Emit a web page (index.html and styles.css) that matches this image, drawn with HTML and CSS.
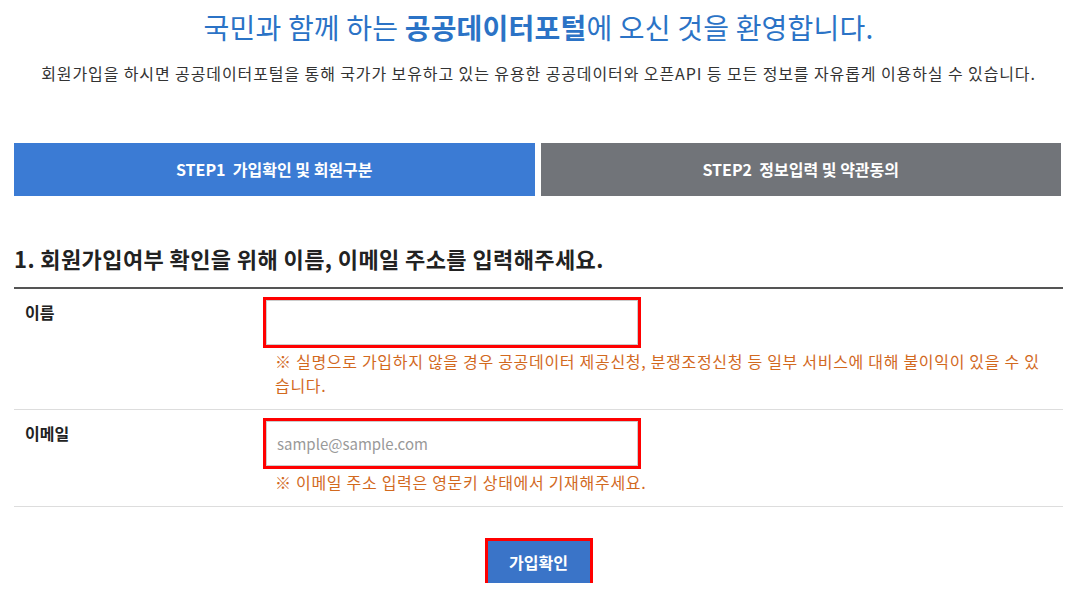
FILE: index.html
```html
<!DOCTYPE html>
<html>
    <head>
        <title>회원가입 - 공공데이터포털</title>
        <link rel="stylesheet" href="styles.css">
    </head>
    <body>
        <div class="wrap">
            <div class="intro">
                <h1>국민과 함께 하는 <b>공공데이터포털</b>에 오신 것을 환영합니다.</h1>
                <p>회원가입을 하시면 공공데이터포털을 통해 국가가 보유하고 있는 유용한 공공데이터와 오픈API 등 모든 정보를 자유롭게 이용하실 수 있습니다.</p>
            </div>

            <div class="steps">
                <div class="step on">STEP1&nbsp; 가입확인 및 회원구분</div>
                <div class="step">STEP2&nbsp; 정보입력 및 약관동의</div>
            </div>

            <h2 class="title">1. 회원가입여부 확인을 위해 이름, 이메일 주소를 입력해주세요.</h2>

            <form name="joinform" class="form">
                <div class="row">
                    <label class="label" for="name">이름</label>
                    <div class="value">
                        <input id="name" name="name" type="text" class="field">
                        <p class="note">※ 실명으로 가입하지 않을 경우 공공데이터 제공신청, 분쟁조정신청 등 일부 서비스에 대해 불이익이 있을 수 있습니다.</p>
                    </div>
                </div>
                <div class="row">
                    <label class="label" for="email">이메일</label>
                    <div class="value">
                        <input id="email" name="email" type="text" class="field" placeholder="sample@sample.com">
                        <p class="note">※ 이메일 주소 입력은 영문키 상태에서 기재해주세요.</p>
                    </div>
                </div>
                <div class="buttons">
                    <button type="button" class="button">가입확인</button>
                </div>
            </form>
        </div>
    </body>
</html>
```

FILE: styles.css
```css
body {
    margin: 0;
    font-family: "Noto Sans CJK KR", "Noto Sans", sans-serif;
    color: #333;
    background: #fff;
}
.wrap {
    padding: 0 4px 0 14px;
}
.intro {
    text-align: center;
    padding-top: 8px;
}
.intro h1 {
    margin: 0;
    font-size: 28px;
    line-height: 38px;
    letter-spacing: 0.2px;
    font-weight: normal;
    color: #2b73c6;
}
.intro p {
    margin: 15px 0 0;
    font-size: 16px;
    line-height: 24px;
    letter-spacing: 0.9px;
    color: #333;
}
.steps {
    display: flex;
    gap: 6px;
    margin-top: 58px;
    padding-right: 2px;
}
.step {
    flex: 1;
    height: 53px;
    line-height: 53px;
    text-align: center;
    font-size: 16px;
    font-weight: bold;
    color: #fff;
    background: #717479;
}
.step.on {
    background: #3b7bd4;
}
.title {
    margin: 47px 0 0;
    padding-bottom: 14px;
    font-size: 22px;
    line-height: 30px;
    letter-spacing: 0.4px;
    color: #222;
    border-bottom: 2px solid #555;
}
.row {
    display: flex;
    padding: 11px 0 12px;
    border-bottom: 1px solid #ddd;
}
.label {
    width: 241px;
    padding-left: 11px;
    font-size: 16px;
    line-height: 24px;
    font-weight: bold;
    color: #222;
}
.value {
    flex: 1;
}
.field {
    box-sizing: border-box;
    display: block;
    width: 372px;
    height: 45px;
    margin: 0;
    padding: 0 10px;
    border: 1px solid #ccc;
    outline: 3px solid #f00;
    font-family: inherit;
    font-size: 15px;
    color: #333;
}
.field::placeholder {
    color: #999;
}
.note {
    margin: 4px 0 0;
    padding-left: 9px;
    padding-right: 16px;
    font-size: 16px;
    line-height: 24px;
    letter-spacing: 0.7px;
    color: #d2691e;
}
.buttons {
    display: flex;
    justify-content: center;
    margin-top: 34px;
}
.button {
    width: 102px;
    height: 42px;
    border: 0;
    outline: 3px solid #f00;
    background: #3a74c8;
    color: #fff;
    font-family: inherit;
    font-size: 16px;
    font-weight: bold;
    cursor: pointer;
}
```
